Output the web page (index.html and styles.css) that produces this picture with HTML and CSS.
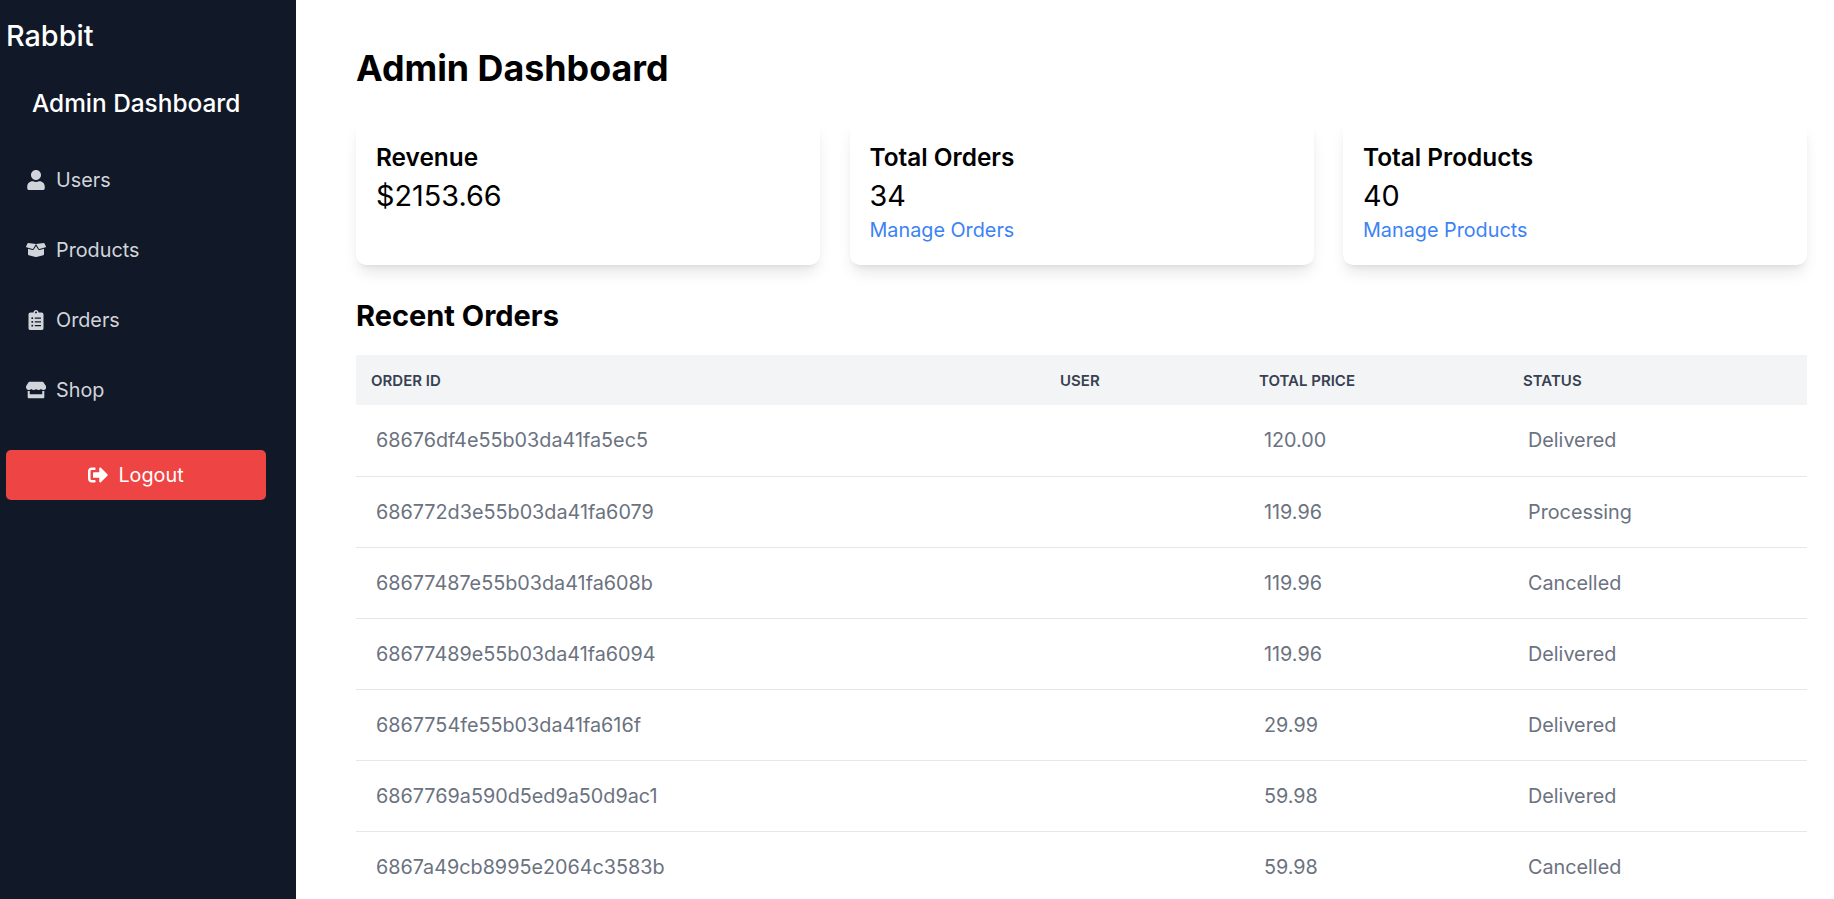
FILE: index.html
```html
<!DOCTYPE html>
<html lang="en">
<head>
    <meta charset="UTF-8">
    <meta name="viewport" content="width=device-width, initial-scale=1.0">
    <title>Admin Dashboard</title>
    <link rel="stylesheet" href="styles.css">
</head>
<body>

<div class="layout">
    <aside class="sidebar">
        <a class="brand" href="#">Rabbit</a>
        <h2 class="sidebar-title">Admin Dashboard</h2>
        <nav class="side-nav">
            <a class="nav-link" href="#">
                <svg class="nav-icon" viewBox="0 0 448 512"><path d="M224 256c70.7 0 128-57.3 128-128S294.7 0 224 0 96 57.3 96 128s57.3 128 128 128zm89.6 32h-16.7c-22.2 10.2-46.9 16-72.9 16s-50.6-5.8-72.9-16h-16.7C60.2 288 0 348.2 0 422.4V464c0 26.5 21.5 48 48 48h352c26.5 0 48-21.5 48-48v-41.6c0-74.2-60.2-134.4-134.4-134.4z"/></svg>
                <span>Users</span>
            </a>
            <a class="nav-link" href="#">
                <svg class="nav-icon" viewBox="0 0 640 512"><path d="M425.7 256c-16.9 0-32.8-9-41.4-23.4L320 126l-64.2 106.6c-8.7 14.5-24.6 23.5-41.5 23.5-4.5 0-9-.6-13.3-1.9L64 215v178c0 14.7 10 27.5 24.2 31l216.2 54.1c10.2 2.5 20.9 2.5 31 0L551.8 424c14.2-3.6 24.2-16.4 24.2-31V215l-137 39.1c-4.3 1.3-8.8 1.9-13.3 1.9zm212.6-112.2L586.8 41c-3.1-6.2-9.8-9.8-16.7-8.9L320 64l91.7 152.1c3.8 6.3 11.4 9.3 18.5 7.3l197.9-56.5c9.9-2.9 14.7-13.9 10.2-23.1zM53.2 41L1.7 143.8c-4.6 9.2.3 20.2 10.1 23l197.9 56.5c7.1 2 14.7-1 18.5-7.3L320 64 69.8 32.1c-6.9-.8-13.5 2.7-16.6 8.9z"/></svg>
                <span>Products</span>
            </a>
            <a class="nav-link" href="#">
                <svg class="nav-icon" viewBox="0 0 384 512"><path d="M336 64h-80c0-35.3-28.7-64-64-64s-64 28.7-64 64H48C21.5 64 0 85.5 0 112v352c0 26.5 21.5 48 48 48h288c26.5 0 48-21.5 48-48V112c0-26.5-21.5-48-48-48zM96 424c-13.3 0-24-10.7-24-24s10.7-24 24-24 24 10.7 24 24-10.7 24-24 24zm0-96c-13.3 0-24-10.7-24-24s10.7-24 24-24 24 10.7 24 24-10.7 24-24 24zm0-96c-13.3 0-24-10.7-24-24s10.7-24 24-24 24 10.7 24 24-10.7 24-24 24zm96-192c13.3 0 24 10.7 24 24s-10.7 24-24 24-24-10.7-24-24 10.7-24 24-24zm128 368c0 4.4-3.6 8-8 8H168c-4.4 0-8-3.6-8-8v-16c0-4.4 3.6-8 8-8h144c4.4 0 8 3.6 8 8v16zm0-96c0 4.4-3.6 8-8 8H168c-4.4 0-8-3.6-8-8v-16c0-4.4 3.6-8 8-8h144c4.4 0 8 3.6 8 8v16zm0-96c0 4.4-3.6 8-8 8H168c-4.4 0-8-3.6-8-8v-16c0-4.4 3.6-8 8-8h144c4.4 0 8 3.6 8 8v16z"/></svg>
                <span>Orders</span>
            </a>
            <a class="nav-link" href="#">
                <svg class="nav-icon" viewBox="0 0 616 512"><path d="M602 118.6L537.1 15C531.3 5.7 521 0 510 0H106C95 0 84.7 5.7 78.9 15L14 118.6c-33.9 54.1-3.8 129.3 59.6 137.9 4.6.6 9.2.9 13.7.9 29.9 0 56.4-13.1 74.6-33.4 18.2 20.3 44.8 33.4 74.6 33.4 29.9 0 56.4-13.1 74.6-33.4 18.2 20.3 44.8 33.4 74.6 33.4 29.9 0 56.4-13.1 74.6-33.4 18.3 20.3 44.8 33.4 74.6 33.4 4.6 0 9.1-.3 13.7-.9 63.6-8.5 93.7-83.8 59.8-137.9zM529.5 288c-10 0-19.9-1.5-29.5-3.8V384H116v-99.8c-9.6 2.2-19.5 3.8-29.5 3.8-6 0-12.1-.4-18-1.2-5.6-.8-11.1-2.1-16.4-3.6V480c0 17.7 14.3 32 32 32h448c17.7 0 32-14.3 32-32V283.2c-5.4 1.6-10.8 2.9-16.4 3.6-6.1.8-12.1 1.2-18.2 1.2z"/></svg>
                <span>Shop</span>
            </a>
        </nav>
        <button class="logout-button" type="button">
            <svg class="logout-icon" viewBox="0 0 512 512"><path d="M497 273L329 441c-15 15-41 4.5-41-17v-96H152c-13.3 0-24-10.7-24-24v-96c0-13.3 10.7-24 24-24h136V88c0-21.4 25.9-32 41-17l168 168c9.3 9.4 9.3 24.6 0 34zM192 436v-40c0-6.6-5.4-12-12-12H96c-17.7 0-32-14.3-32-32V160c0-17.7 14.3-32 32-32h84c6.6 0 12-5.4 12-12V76c0-6.6-5.4-12-12-12H96c-53 0-96 43-96 96v192c0 53 43 96 96 96h84c6.6 0 12-5.4 12-12z"/></svg>
            <span>Logout</span>
        </button>
    </aside>

    <main class="content">
        <h1 class="page-title">Admin Dashboard</h1>

        <div class="stat-cards">
            <div class="stat-card">
                <h2 class="stat-label">Revenue</h2>
                <p class="stat-value">$2153.66</p>
            </div>
            <div class="stat-card">
                <h2 class="stat-label">Total Orders</h2>
                <p class="stat-value">34</p>
                <a class="stat-link" href="#">Manage Orders</a>
            </div>
            <div class="stat-card">
                <h2 class="stat-label">Total Products</h2>
                <p class="stat-value">40</p>
                <a class="stat-link" href="#">Manage Products</a>
            </div>
        </div>

        <h2 class="section-title">Recent Orders</h2>
        <table class="orders-table">
            <thead>
                <tr>
                    <th class="col-id">Order ID</th>
                    <th class="col-user">User</th>
                    <th class="col-price">Total Price</th>
                    <th>Status</th>
                </tr>
            </thead>
            <tbody>
                <tr><td>68676df4e55b03da41fa5ec5</td><td></td><td>120.00</td><td>Delivered</td></tr>
                <tr><td>686772d3e55b03da41fa6079</td><td></td><td>119.96</td><td>Processing</td></tr>
                <tr><td>68677487e55b03da41fa608b</td><td></td><td>119.96</td><td>Cancelled</td></tr>
                <tr><td>68677489e55b03da41fa6094</td><td></td><td>119.96</td><td>Delivered</td></tr>
                <tr><td>6867754fe55b03da41fa616f</td><td></td><td>29.99</td><td>Delivered</td></tr>
                <tr><td>6867769a590d5ed9a50d9ac1</td><td></td><td>59.98</td><td>Delivered</td></tr>
                <tr><td>6867a49cb8995e2064c3583b</td><td></td><td>59.98</td><td>Cancelled</td></tr>
            </tbody>
        </table>
    </main>
</div>

</body>
</html>
```

FILE: styles.css
```css
* {
    box-sizing: border-box;
}
html, body {
    height: 100%;
    overflow: hidden;
}
body {
    margin: 0;
    background-color: white;
    color: black;
    font-family: Inter, "Liberation Sans", sans-serif;
    font-size: 19.8px;
}
a {
    text-decoration: none;
}
.layout {
    display: flex;
    height: 100vh;
}

/* sidebar */
.sidebar {
    width: 296px;
    flex-shrink: 0;
    background-color: #111827;
    color: white;
    padding: 18px 30px 0 6px;
}
.brand {
    display: block;
    color: white;
    font-size: 28.8px;
    font-weight: 500;
    line-height: 36px;
}
.sidebar-title {
    margin: 34px 0 0 26px;
    font-size: 24.4px;
    font-weight: 500;
    line-height: 30px;
}
.side-nav {
    margin-top: 27px;
    display: flex;
    flex-direction: column;
}
.nav-link {
    display: flex;
    align-items: center;
    gap: 10px;
    height: 70px;
    padding-left: 20px;
    color: #d1d5db;
    line-height: 30px;
}
.nav-icon {
    width: 20px;
    height: 20px;
    fill: #d1d5db;
}
.logout-button {
    display: flex;
    align-items: center;
    justify-content: center;
    gap: 10px;
    width: 100%;
    height: 50px;
    margin-top: 25px;
    background-color: #ef4444;
    color: white;
    border: none;
    border-radius: 5px;
    font-family: inherit;
    font-size: 19.8px;
}
.logout-icon {
    width: 20px;
    height: 20px;
    fill: white;
}

/* main area */
.content {
    flex: 1;
    min-width: 0;
    padding: 46px 27px 0 60px;
}
.page-title {
    margin: 0;
    font-size: 35.8px;
    font-weight: 700;
    line-height: 45px;
}
.stat-cards {
    display: grid;
    grid-template-columns: repeat(3, 1fr);
    gap: 29.5px;
    margin-top: 29px;
}
.stat-card {
    height: 145px;
    padding: 20px;
    background-color: white;
    border-radius: 10px;
    box-shadow: 0 10px 15px -3px rgba(0, 0, 0, 0.1), 0 4px 6px -4px rgba(0, 0, 0, 0.1);
}
.stat-label {
    margin: 0;
    font-size: 24.4px;
    font-weight: 600;
    line-height: 35px;
}
.stat-value {
    margin: 3px 0 0;
    font-size: 28.8px;
    line-height: 36px;
}
.stat-link {
    display: block;
    margin-top: 1px;
    color: #3b82f6;
    line-height: 30px;
}
.section-title {
    margin: 33px 0 0;
    font-size: 29px;
    font-weight: 700;
    line-height: 36px;
}
.orders-table {
    width: 100%;
    margin-top: 21px;
    border-collapse: collapse;
    table-layout: fixed;
    color: #6b7280;
}
.orders-table th {
    height: 50px;
    padding: 0 15px;
    background-color: #f3f4f6;
    color: #374151;
    font-size: 15px;
    font-weight: 600;
    text-align: left;
    text-transform: uppercase;
}
.col-id {
    width: 689px;
}
.col-user {
    width: 199px;
}
.col-price {
    width: 264px;
}
.orders-table td {
    height: 71px;
    padding: 0 20px;
    border-bottom: 1px solid #e5e7eb;
    line-height: 30px;
}
```
